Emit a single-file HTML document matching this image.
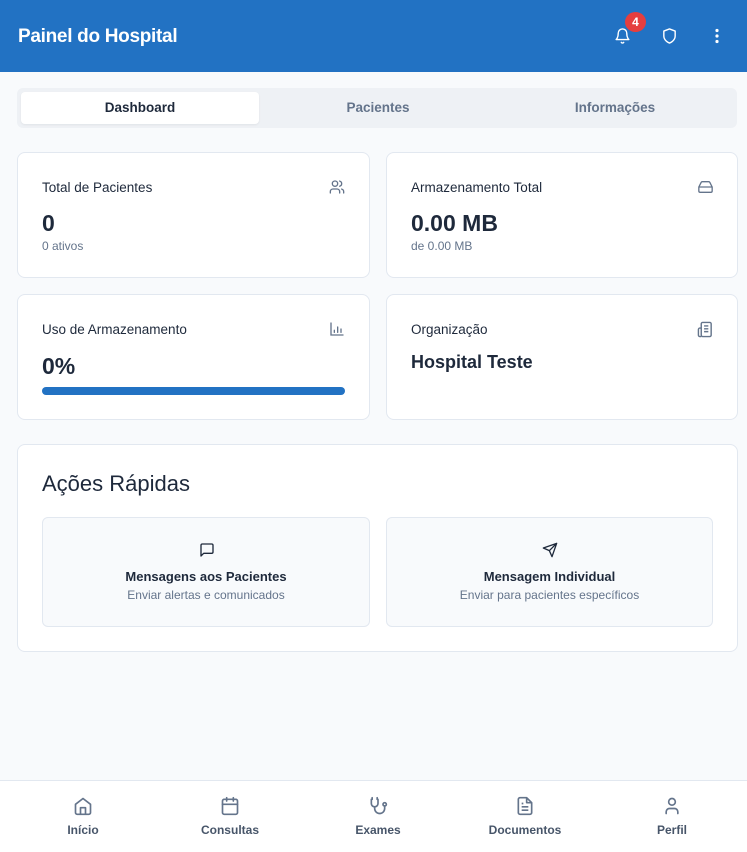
<!DOCTYPE html>
<html><head><meta charset="utf-8"><style>
*{box-sizing:border-box;margin:0;padding:0}
body{width:747px;height:852px;background:#f8fafc;font-family:"Liberation Sans",sans-serif;color:#1e293b;position:relative;overflow:hidden}
.hdr{position:absolute;left:0;top:0;width:747px;height:72px;background:#2272c3;color:#fff}
.hdr h1{position:absolute;left:18px;top:26px;font-size:19px;font-weight:bold;letter-spacing:-0.3px}
.ic{position:absolute}
.tabs{position:absolute;left:17px;top:88px;width:720px;height:40px;background:#eef1f5;border-radius:6px}
.tab{position:absolute;top:4px;height:32px;width:238px;line-height:32px;text-align:center;font-size:13.5px;font-weight:bold;color:#64748b}
.tab.a{background:#fff;color:#1e293b;border-radius:4px;box-shadow:0 1px 2px rgba(0,0,0,.06)}
.card{position:absolute;background:#fff;border:1px solid #e2e8f0;border-radius:8px}
.t{position:absolute;left:24px;top:27px;font-size:13.5px;color:#1e293b}
.big{position:absolute;left:24px;top:57px;font-size:23px;font-weight:bold}
.sub{position:absolute;left:24px;top:86px;font-size:12px;color:#64748b}
.qa{position:absolute;top:72px;width:328px;height:110px;background:#f8fafc;border:1px solid #e2e8f0;border-radius:6px;text-align:center}
.qa b{display:block;margin-top:51px;font-size:13px;color:#1e293b}
.qa span{display:block;margin-top:4px;font-size:12px;color:#64748b}
.nav{position:absolute;left:0;top:780px;width:747px;height:72px;background:#fff;border-top:1px solid #e2e8f0}
.ni{position:absolute;top:0;width:120px;text-align:center;font-size:12px;font-weight:bold;color:#475569}
.ni svg{display:block;margin:15px auto 7px}
</style></head><body>
<div class="hdr"><h1>Painel do Hospital</h1>
<svg class="ic" style="left:614px;top:27px" width="17" height="18" viewBox="0 0 24 24" fill="none" stroke="#fff" stroke-width="2" stroke-linecap="round" stroke-linejoin="round"><path d="M6 8a6 6 0 0 1 12 0c0 7 3 9 3 9H3s3-2 3-9"/><path d="M10.3 21a1.94 1.94 0 0 0 3.4 0"/></svg>
<div style="position:absolute;left:625px;top:12px;width:21px;height:20px;border-radius:50%;background:#e53e3e;color:#fff;font-size:12px;font-weight:bold;text-align:center;line-height:20px">4</div>
<svg class="ic" style="left:661px;top:27px" width="17" height="18" viewBox="0 0 24 24" fill="none" stroke="#fff" stroke-width="2" stroke-linejoin="round"><path d="M12 22s8-3 8-10V5l-8-3-8 3v7c0 7 8 10 8 10z"/></svg>
<svg class="ic" style="left:714px;top:28px" width="6" height="16" viewBox="0 0 6 16"><circle cx="3" cy="2.5" r="1.6" fill="#fff"/><circle cx="3" cy="8" r="1.6" fill="#fff"/><circle cx="3" cy="13.5" r="1.6" fill="#fff"/></svg>
</div>
<div class="tabs"><div class="tab a" style="left:4px">Dashboard</div><div class="tab" style="left:242px">Pacientes</div><div class="tab" style="left:479px">Informações</div></div>

<div class="card" style="left:17px;top:152px;width:353px;height:126px"><div class="t">Total de Pacientes</div><div class="big">0</div><div class="sub">0 ativos</div>
<svg class="ic" style="left:311px;top:26px" width="16" height="16" viewBox="0 0 24 24" fill="none" stroke="#64748b" stroke-width="2" stroke-linecap="round"><path d="M16 21v-2a4 4 0 0 0-4-4H6a4 4 0 0 0-4 4v2"/><circle cx="9" cy="7" r="4"/><path d="M22 21v-2a4 4 0 0 0-3-3.87M16 3.13a4 4 0 0 1 0 7.75"/></svg></div>
<div class="card" style="left:386px;top:152px;width:352px;height:126px"><div class="t">Armazenamento Total</div><div class="big">0.00 MB</div><div class="sub">de 0.00 MB</div>
<svg class="ic" style="left:310px;top:26px" width="17" height="16" viewBox="0 0 24 24" fill="none" stroke="#64748b" stroke-width="2" stroke-linejoin="round"><path d="M22 12H2M5.45 5.11 2 12v6a2 2 0 0 0 2 2h16a2 2 0 0 0 2-2v-6l-3.45-6.89A2 2 0 0 0 16.76 4H7.24a2 2 0 0 0-1.79 1.11z"/></svg></div>
<div class="card" style="left:17px;top:294px;width:353px;height:126px"><div class="t">Uso de Armazenamento</div><div class="big" style="top:58px">0%</div>
<div style="position:absolute;left:24px;top:92px;width:303px;height:8px;border-radius:4px;background:#2272c3"></div>
<svg class="ic" style="left:311px;top:26px" width="16" height="16" viewBox="0 0 24 24" fill="none" stroke="#64748b" stroke-width="2" stroke-linecap="round"><path d="M3 3v18h18M8 17v-3M13 17V9M18 17v-5"/></svg></div>
<div class="card" style="left:386px;top:294px;width:352px;height:126px"><div class="t">Organização</div><div style="position:absolute;left:24px;top:57px;font-size:18px;font-weight:bold">Hospital Teste</div>
<svg class="ic" style="left:310px;top:26px" width="17" height="17" viewBox="0 0 24 24" fill="none" stroke="#64748b" stroke-width="2" stroke-linejoin="round"><rect x="6" y="2" width="14" height="20" rx="2"/><path d="M6 10H4a2 2 0 0 0-2 2v8a2 2 0 0 0 2 2h2M10 7h6M10 11h6M10 15h6"/></svg></div>

<div class="card" style="left:17px;top:444px;width:721px;height:208px">
<div style="position:absolute;left:24px;top:26px;font-size:22px;color:#1e293b">Ações Rápidas</div>
<div class="qa" style="left:24px"><svg class="ic" style="left:156px;top:24px" width="16" height="16" viewBox="0 0 24 24" fill="none" stroke="#1e293b" stroke-width="2" stroke-linejoin="round"><path d="M21 15a2 2 0 0 1-2 2H7l-4 4V5a2 2 0 0 1 2-2h14a2 2 0 0 1 2 2z"/></svg><b>Mensagens aos Pacientes</b><span>Enviar alertas e comunicados</span></div>
<div class="qa" style="left:368px;width:327px"><svg class="ic" style="left:155px;top:24px" width="16" height="16" viewBox="0 0 24 24" fill="none" stroke="#1e293b" stroke-width="2" stroke-linejoin="round"><path d="M22 2 11 13M22 2l-7 20-4-9-9-4z"/></svg><b>Mensagem Individual</b><span>Enviar para pacientes específicos</span></div>
</div>

<div class="nav">
<div class="ni" style="left:23px"><svg width="20" height="20" viewBox="0 0 24 24" fill="none" stroke="#64748b" stroke-width="2" stroke-linejoin="round"><path d="M3 10 12 3l9 7v10a2 2 0 0 1-2 2H5a2 2 0 0 1-2-2z"/><path d="M9 22v-8h6v8"/></svg>Início</div>
<div class="ni" style="left:170px"><svg width="20" height="20" viewBox="0 0 24 24" fill="none" stroke="#64748b" stroke-width="2" stroke-linecap="round"><rect x="3" y="4" width="18" height="18" rx="2"/><path d="M16 2v4M8 2v4M3 10h18"/></svg>Consultas</div>
<div class="ni" style="left:318px"><svg width="20" height="20" viewBox="0 0 24 24" fill="none" stroke="#64748b" stroke-width="2" stroke-linecap="round"><path d="M5 2v2M11 2v2M4 4v5a4 4 0 0 0 8 0V4M8 13v2a6 6 0 0 0 12 0v-3"/><circle cx="20" cy="10" r="2"/></svg>Exames</div>
<div class="ni" style="left:465px"><svg width="20" height="20" viewBox="0 0 24 24" fill="none" stroke="#64748b" stroke-width="2" stroke-linejoin="round"><path d="M14 2H6a2 2 0 0 0-2 2v16a2 2 0 0 0 2 2h12a2 2 0 0 0 2-2V8z"/><path d="M14 2v6h6M16 13H8M16 17H8M10 9H8"/></svg>Documentos</div>
<div class="ni" style="left:612px"><svg width="20" height="20" viewBox="0 0 24 24" fill="none" stroke="#64748b" stroke-width="2" stroke-linecap="round"><circle cx="12" cy="7" r="4"/><path d="M19 21v-2a4 4 0 0 0-4-4H9a4 4 0 0 0-4 4v2"/></svg>Perfil</div>
</div>
</body></html>
